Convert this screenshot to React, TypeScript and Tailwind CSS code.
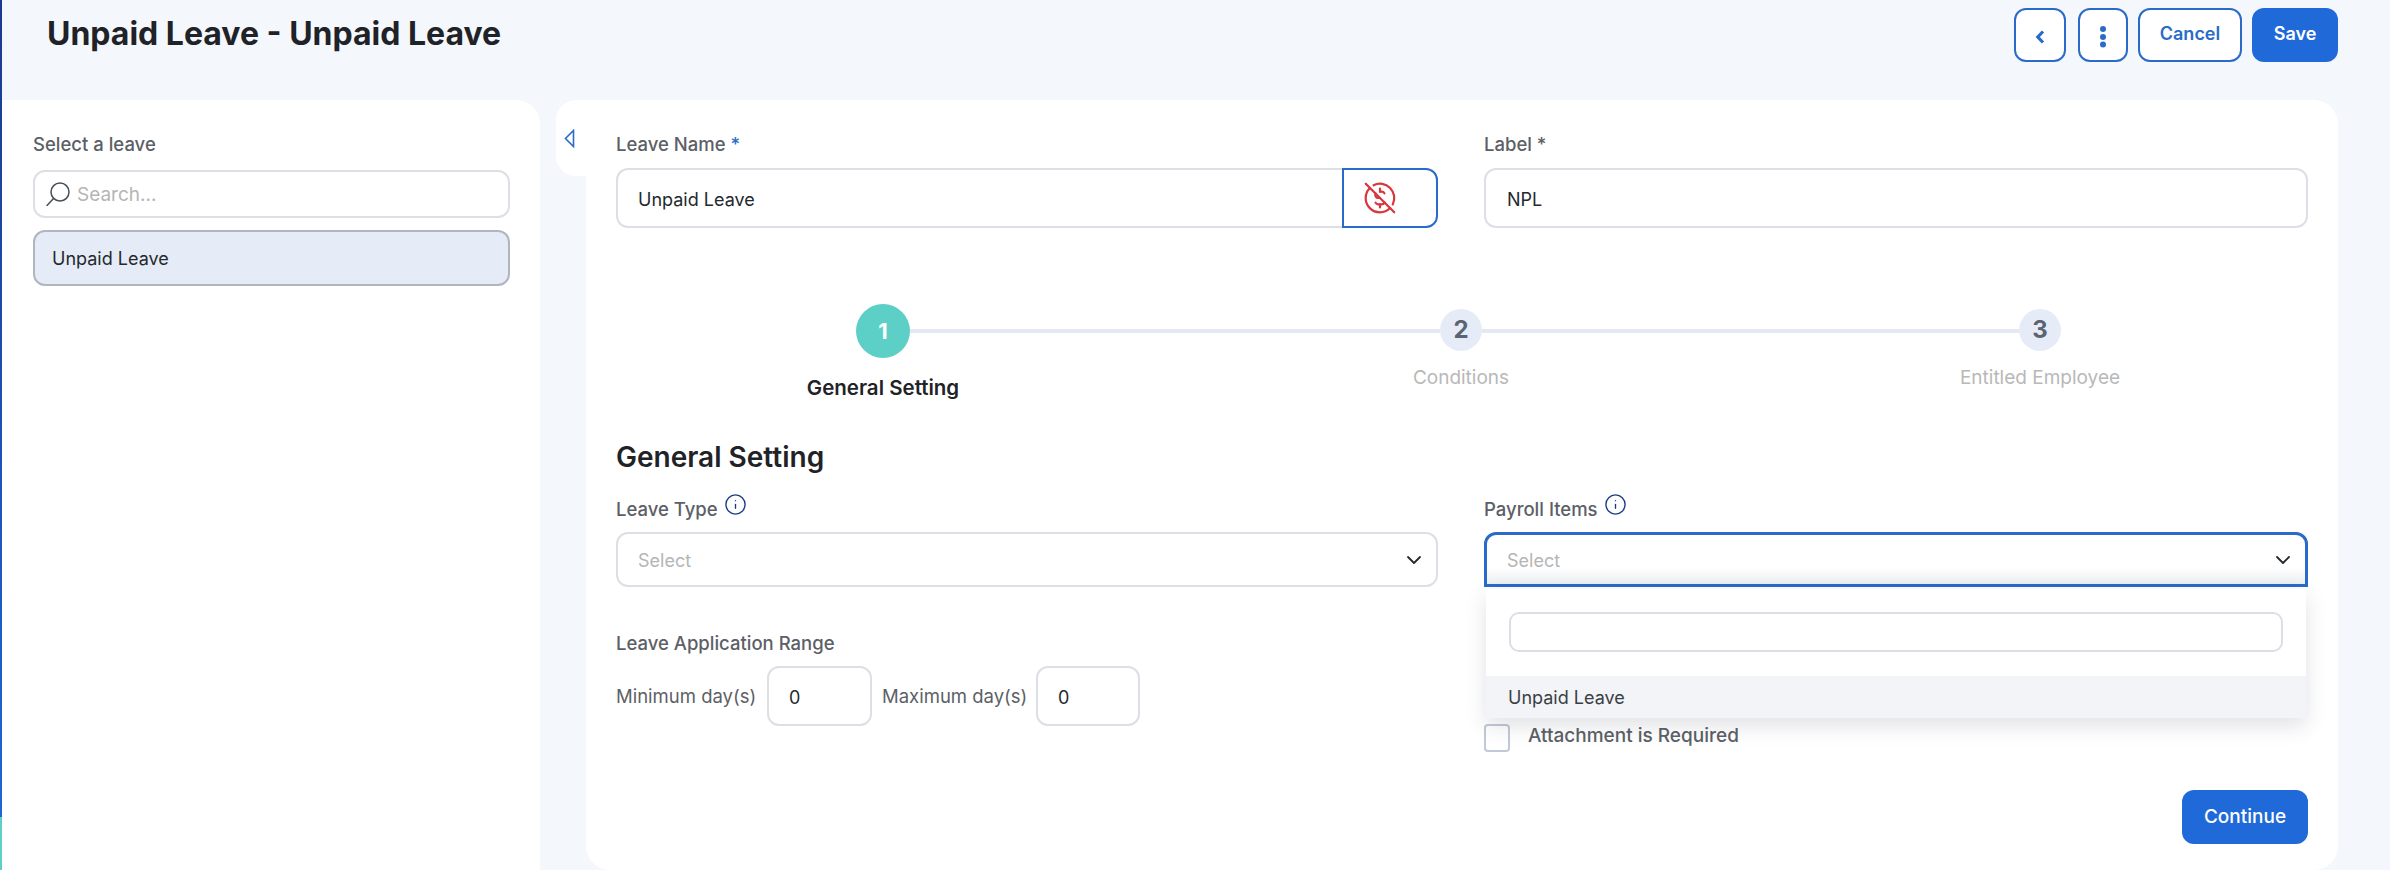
import React from 'react';
import { ChevronDown, Info } from 'lucide-react';

// shared field border
const fieldClass = 'border-2 border-[#dcdfe4] rounded-[12px] bg-white';

function FieldLabel({ children }: { children: React.ReactNode }) {
    return <div className="h-[24px] pt-[1px] flex items-center text-[18.5px] leading-[24px] font-medium text-[#5c6066]">{children}</div>;
}

function InfoLabel({ text }: { text: string }) {
    return (
        <div className="h-[24px] pt-[1px] flex items-center gap-[6px] text-[18.5px] leading-[24px] font-medium text-[#5c6066]">
            {text}
            <Info className="w-[23px] h-[23px] -mt-[8px] text-[#1c3a7e]" strokeWidth={1.4} />
        </div>
    );
}

function CoinOff() {
    return (
        <svg width="38" height="38" viewBox="0 0 24 24" fill="none" stroke="#d9363e" strokeWidth="1.4" strokeLinecap="round" strokeLinejoin="round">
            <path d="M14.8 9a2 2 0 0 0 -1.8 -1h-1m-2.82 1.171a2 2 0 0 0 1.82 2.829h1m2.824 2.822a2 2 0 0 1 -1.824 1.178h-2a2 2 0 0 1 -1.8 -1" />
            <path d="M20.042 16.045a9 9 0 0 0 -12.087 -12.087m-2.318 1.677a9 9 0 1 0 12.725 12.73" />
            <path d="M12 6v2m0 8v2" />
            <path d="M3 3l18 18" />
        </svg>
    );
}

function SearchGlass() {
    return (
        <svg width="24" height="24" viewBox="0 0 24 24" fill="none" stroke="#4a4f55" strokeWidth="1.5" strokeLinecap="round">
            <circle cx="14" cy="10" r="9" />
            <path d="M7.5 16.5 1 23.5" />
        </svg>
    );
}

function App() {
    return (
        <div className="w-[2390px] h-[870px] flex overflow-hidden bg-[#f4f7fc] font-['Inter',sans-serif]">
            {/* Left edge stripe */}
            <div className="w-[2px] flex flex-col">
                <div className="flex-1 bg-linear-to-b from-[#1b3a8f] to-[#1f66d6]" />
                <div className="h-[53px] bg-[#5ccfc7]" />
            </div>

            <div className="flex-1 flex flex-col">
                {/* Header */}
                <div className="h-[100px] flex justify-between pl-[45px] pr-[52px]">
                    <h1 className="pt-[14px] text-[32px] leading-[40px] font-bold text-[#1f2328]">Unpaid Leave - Unpaid Leave</h1>
                    <div className="flex gap-[10px] pt-[8px] h-[62px]">
                        <button className="w-[52px] mr-[2px] flex items-center justify-center border-2 border-[#2a6bc9] rounded-[12px] bg-white">
                            <svg width="12" height="16" viewBox="0 0 12 16" fill="none" stroke="#2a6bc9" strokeWidth="3.2" className="mt-[4px]">
                                <path d="M9 2.5 3.8 8 9 13.5" />
                            </svg>
                        </button>
                        <button className="w-[50px] flex items-center justify-center border-2 border-[#2a6bc9] rounded-[12px] bg-white">
                            <svg width="8" height="26" viewBox="0 0 8 26" fill="#2a6bc9" className="mt-[4px]">
                                <circle cx="4" cy="5" r="3" />
                                <circle cx="4" cy="13" r="3" />
                                <circle cx="4" cy="20.5" r="3" />
                            </svg>
                        </button>
                        <button className="w-[104px] pb-[3px] border-2 border-[#2a6bc9] rounded-[12px] bg-white text-[18px] font-semibold text-[#2a6bc9]">Cancel</button>
                        <button className="w-[86px] pb-[3px] rounded-[12px] bg-[#1f69d9] text-[18px] font-semibold text-white">Save</button>
                    </div>
                </div>

                <div className="flex-1 flex">
                    {/* Leave list */}
                    <div className="w-[538px] bg-white rounded-tr-[24px] pt-[31px] pl-[31px] pr-[30px]">
                        <FieldLabel>Select a leave</FieldLabel>
                        <div className={`${fieldClass} h-[48px] mt-[15px] flex items-center pl-[11px] gap-[7px]`}>
                            <SearchGlass />
                            <span className="pt-[2px] text-[19px] text-[#b5b5b5]">Search...</span>
                        </div>
                        <div className="h-[56px] mt-[12px] flex items-center pl-[17px] border-2 border-[#b0b5bf] rounded-[12px] bg-[#e6ecf7] text-[18px] text-[#24292e]">
                            Unpaid Leave
                        </div>
                    </div>

                    {/* Collapse tab */}
                    <div className="ml-[16px] w-[30px] h-[76px] bg-white rounded-l-[20px] pt-[29px] pl-[8px]">
                        <svg width="11" height="19" viewBox="0 0 11 19" fill="none" stroke="#2a6bc9" strokeWidth="1.6">
                            <path d="M9.5 1.5v16L1.5 9.5z" />
                        </svg>
                    </div>

                    {/* Main form */}
                    <div className="w-[1752px] bg-white rounded-[24px] rounded-tl-none pt-[31px] px-[30px]">
                        <div className="grid grid-cols-[822px_824px] gap-x-[46px]">
                            <div>
                                <FieldLabel>
                                    Leave Name&nbsp;<span className="text-[#2a6bc9]">*</span>
                                </FieldLabel>
                                <div className="mt-[13px] h-[60px] flex">
                                    <div className="flex-1 flex items-center pl-[20px] pt-[2px] border-2 border-r-0 border-[#dcdfe4] rounded-l-[12px] text-[18px] text-[#24292e]">Unpaid Leave</div>
                                    <div className="w-[96px] flex items-center pl-[17px] border-2 border-[#2a6bc9] rounded-r-[12px]">
                                        <CoinOff />
                                    </div>
                                </div>
                            </div>
                            <div>
                                <FieldLabel>Label *</FieldLabel>
                                <div className={`${fieldClass} mt-[13px] h-[60px] flex items-center pl-[21px] pt-[2px] text-[18px] text-[#24292e]`}>NPL</div>
                            </div>
                        </div>

                        {/* Stepper */}
                        <div className="mt-[76px] ml-[240px] mr-[247px] h-[54px] flex items-center">
                            <div className="w-[54px] h-[54px] rounded-full bg-[#5ccfc7] flex items-center justify-center text-[22px] font-bold text-white">1</div>
                            <div className="w-[530px] h-[4px] bg-[#e4e8f0]" />
                            <div className="w-[42px] h-[42px] -mt-[3px] rounded-full bg-[#e6ecf7] flex items-center justify-center text-[24px] font-bold text-[#5a6472]">2</div>
                            <div className="flex-1 h-[4px] bg-[#e4e8f0]" />
                            <div className="w-[42px] h-[42px] -mt-[3px] rounded-full bg-[#e6ecf7] flex items-center justify-center text-[24px] font-bold text-[#5a6472]">3</div>
                        </div>
                        <div className="mt-[8px] -mx-[22px] grid grid-cols-[578px_578px_auto] text-center">
                            <div className="pt-[10px] text-[20.5px] leading-[24px] font-semibold text-[#1f2328]">General Setting</div>
                            <div className="text-[19px] leading-[24px] text-[#b8b8b8]">Conditions</div>
                            <div className="text-[19px] leading-[24px] text-[#b8b8b8]">Entitled Employee</div>
                        </div>

                        <h2 className="mt-[39px] text-[28px] leading-[36px] font-semibold text-[#1f2328]">General Setting</h2>

                        <div className="mt-[21px] grid grid-cols-[822px_824px] gap-x-[46px]">
                            <div>
                                <InfoLabel text="Leave Type" />
                                <div className={`${fieldClass} mt-[12px] h-[55px] flex items-center justify-between pl-[20px] pr-[10px] text-[18px] text-[#b5b5b5]`}>
                                    <span className="pt-[2px]">Select</span>
                                    <ChevronDown className="w-[24px] h-[24px] text-[#24292e]" strokeWidth={1.8} />
                                </div>
                                <div className="mt-[43px]">
                                    <FieldLabel>Leave Application Range</FieldLabel>
                                </div>
                                <div className="mt-[12px] flex items-center text-[18.5px] text-[#5c6066]">
                                    <span className="w-[151px] pt-[2px]">Minimum day(s)</span>
                                    <div className={`${fieldClass} w-[105px] h-[60px] flex items-center pl-[20px] pt-[2px] text-[18px] text-[#24292e]`}>0</div>
                                    <span className="w-[164px] pl-[10px] pt-[2px]">Maximum day(s)</span>
                                    <div className={`${fieldClass} w-[104px] h-[60px] flex items-center pl-[20px] pt-[2px] text-[18px] text-[#24292e]`}>0</div>
                                </div>
                            </div>
                            <div>
                                <InfoLabel text="Payroll Items" />
                                <div className="relative mt-[12px] h-[55px]">
                                    <div className="h-full flex items-center justify-between pl-[20px] pr-[10px] border-[3px] border-[#2a6bc9] rounded-t-[12px] bg-linear-to-b from-white from-65% to-[#eceef2] text-[18px] text-[#b5b5b5]">
                                        <span className="pt-[2px]">Select</span>
                                        <ChevronDown className="w-[24px] h-[24px] text-[#24292e]" strokeWidth={1.8} />
                                    </div>
                                    {/* Open dropdown */}
                                    <div className="absolute left-[2px] right-[2px] top-[57px] z-10 h-[129px] bg-white shadow-[0_8px_20px_rgba(40,50,70,0.14)] pt-[23px]">
                                        <div className="mx-[23px] h-[40px] border-2 border-[#dbdfe4] rounded-[10px]" />
                                        <div className="mt-[24px] h-[42px] flex items-center pl-[22px] bg-[#f3f4f8] text-[18px] text-[#3a3f45]">Unpaid Leave</div>
                                    </div>
                                </div>
                                <div className="mt-[137px] flex items-center gap-[18px] h-[28px]">
                                    <div className="w-[26px] h-[28px] border-2 border-[#c3c8d8] rounded-[4px]" />
                                    <span className="-mt-[3px] text-[19px] font-medium text-[#5c6066]">Attachment is Required</span>
                                </div>
                            </div>
                        </div>

                        <div className="mt-[38px] flex justify-end">
                            <button className="w-[126px] h-[54px] rounded-[12px] bg-[#1f69d9] text-[19px] font-medium text-white">Continue</button>
                        </div>
                    </div>
                </div>
            </div>
        </div>
    );
}

export default App;
